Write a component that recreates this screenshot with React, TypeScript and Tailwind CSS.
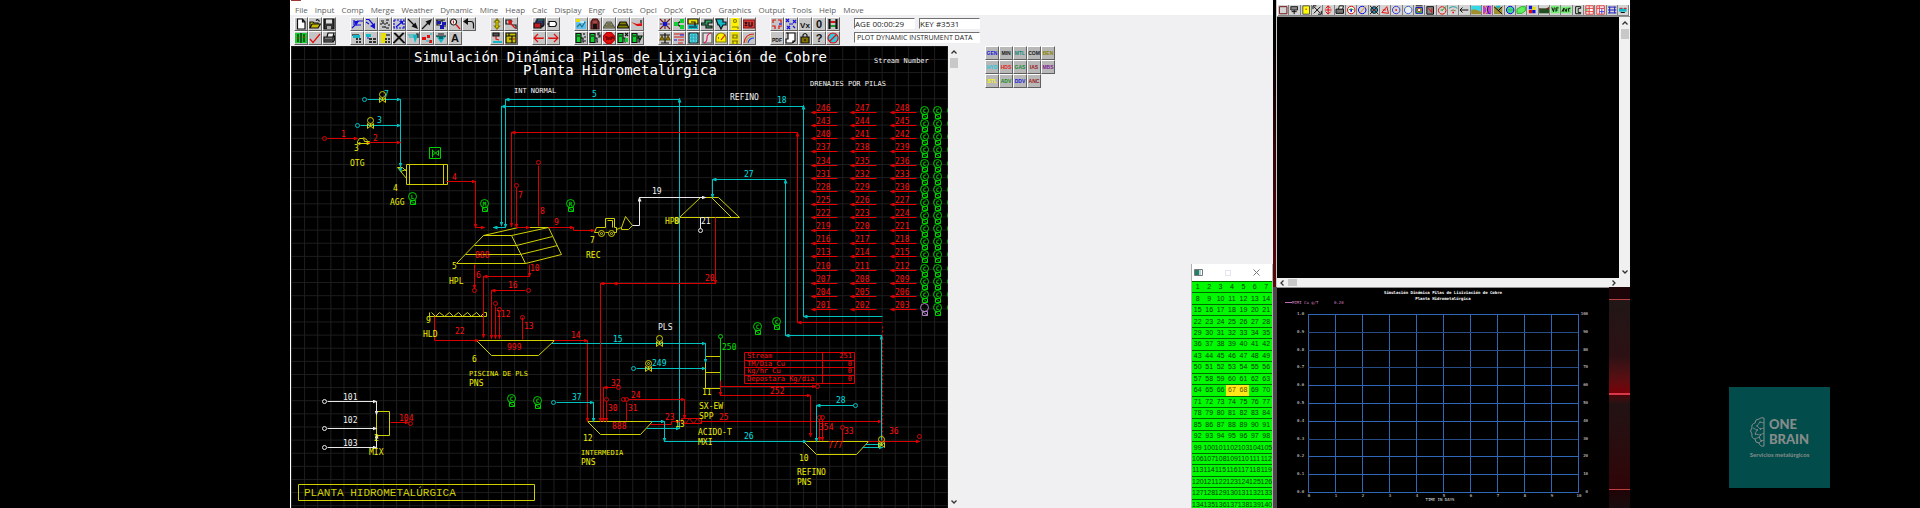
import React from "react";

type Mark = [stroke: string, fill: string, d: string];
type Tool = { name: string; marks?: Mark[]; text?: string; color?: string };

const N = "none";
const K = "#111111";
const R = "#e01010";
const B = "#1010e0";
const Y = "#e8e000";
const C = "#10b8c8";
const G = "#10d030";

function Glyph({ tool }: { tool: Tool }) {
  return (
    <svg viewBox="0 0 12 12" className="block h-full w-full" aria-hidden="true">
      {tool.marks?.map(([stroke, fill, d], i) => (
        <path key={i} d={d} stroke={stroke} fill={fill} strokeWidth="1.2" />
      ))}
      {tool.text && (
        <text
          x="6"
          y="9.5"
          textAnchor="middle"
          fill={tool.color ?? K}
          fontSize={tool.text.length > 2 ? 5 : tool.text.length > 1 ? 8 : 11}
          fontWeight="bold"
          fontFamily="Liberation Sans, sans-serif"
        >
          {tool.text}
        </text>
      )}
    </svg>
  );
}

const pump: Mark[] = [
  [N, G, "M1 1h5v10H1z"],
  [K, N, "M1 1.5h5v9H1zM2 4h3M6 6h2v4h1"],
];

const groups: Tool[][][] = [
  [
    [
      { name: "New", marks: [[K, "#fff", "M2.5 1h5l2.500 3v7h-7.500zM7.500 1v3h2.500"]] },
      { name: "Open", marks: [[K, Y, "M1 10V4h3l1 1h4v1.500"], [K, "#c8b800", "M1 10l2-4h8.500l-2.500 4z"], [K, N, "M7 2.500q2-2 3.500 1"]] },
      { name: "Save", marks: [[K, "#333", "M1 1h10v10H1z"], [N, "#ddd", "M3 1.500h6v4H3z"], [N, "#aaa", "M4 8h4v3H4z"]] },
    ],
    [
      { name: "Panels", marks: [[N, G, "M0 1h12v10H0z"], [K, N, "M3 2v8M6 1v10M9 2v8"], [R, N, "M3 5v2M9 4v2"]] },
      { name: "Check", marks: [[R, N, "M1 7l3 3.500L11 2"]] },
      { name: "Print", marks: [[K, "#eee", "M4 5l1-4h6l-1 4"], [K, "#777", "M1 5h9v5H1z"], [K, N, "M10 5l1.500-1v4l-1.500 2M2 8h7"]] },
    ],
  ],
  [
    [
      { name: "Stream in", marks: [[B, N, "M1 10l3-3M3 7h7M6 3h6M3 2v5"], [N, B, "M3 3h5L5 8z"]] },
      { name: "Stream out", marks: [[B, N, "M1 1.500h3l5 6"], [N, B, "M5 8l5 3V5z"], [B, N, "M1 4l3 2"]] },
      { name: "Rotate", marks: [[K, N, "M2 3h3M7 2h3M1 6h2M5 6h2M9 7h2M3 9h2M7 10h3M4 4v2M8 4v2M6 8v2"]] },
      { name: "Select area", marks: [[B, N, "M1 2h2m1 0h2m1 0h2m1 0h1v2m0 1v2m0 1v2h-2m-1 0h-2m-1 0h-2m-1 0h-1v-2m0-1v-2m0-1v-2M3 9l6-5"], [N, B, "M6 3h4v4z"]] },
      { name: "Arrow down", marks: [[K, N, "M1 1l8 8"], [N, K, "M11 11L4.500 8.500l4-4z"]] },
      { name: "Arrow up", marks: [[K, N, "M1 11l8-8"], [N, K, "M11 1L8.500 7.500l-4-4z"]] },
      { name: "Units", marks: [[K, N, "M1 2h9M2 2v5h3"], [N, "#1818b0", "M2 3h4v3H2zM7 4h4v3H7zM5 7h4v4H5z"], [K, N, "M7 2v2M9 8h2"]] },
      { name: "Find", marks: [[K, "#fff", "M4.500 1a3 3 0 1 0 .1 0"], [R, N, "M4.500 2.500v3"], [R, N, "M7 6.500l4 4.500"]] },
      { name: "Undo", marks: [[K, N, "M3 3.500h5q2.500 0 2.500 3v4"], [N, K, "M0 3.500L5 0v7z"]] },
    ],
    [
      { name: "Basket", marks: [[K, N, "M1 3h7"], [N, C, "M2 3h7v3H2z"], [N, "#333", "M5 6h2v2H5zM8 6h2v2H8zM5 9h2v2H5zM8 9h2v2H8z"]] },
      { name: "Trays", marks: [[N, C, "M1 2h5v3H1z"], [N, "#333", "M4 6h3v2H4zM8 6h3v2H8zM4 9h3v2H4zM8 9h3v2H8z"], [B, N, "M2 6h2"]] },
      { name: "Boxes", marks: [[N, Y, "M2 1h5v10H2z"], [N, "#333", "M6 6h2v2H6zM9 6h2v2H9zM6 9h2v2H6zM9 9h2v2H9z"], [K, N, "M7 3h4"]] },
      { name: "Delete", marks: [[K, N, "M1 1l10 10M11 1L1 11M2 1l10 10M10 1L0 11"]] },
      { name: "Spray", marks: [[C, N, "M1 3h8M2 5h6"], [N, C, "M6 3h5L8 11z"], [K, N, "M9 2h2v4"]] },
      { name: "Nodes", marks: [[N, R, "M1 5h4v3H1zM6 3h3v3H6zM8 8h3v3H8z"], [C, N, "M5 9h4M9 2h2"]] },
      { name: "Diamond", marks: [[N, C, "M1 4h10L6 11z"], [K, N, "M1 4h10M3 2h6M4 6h4"]] },
      { name: "Text", text: "A" },
    ],
  ],
  [
    [
      { name: "Fit height", marks: [["#807800", "#ffee00", "M6 1l2.500 3H7v4h1.500L6 11 3.500 8H5V4H3.500z"]] },
      { name: "Move box", marks: [[K, N, "M1 2h5v4H1zM7 7h4v4"], [R, N, "M4 4l6 6"], [N, R, "M3 2l5 1-4 4z"]] },
    ],
    [
      { name: "Export", marks: [[K, "#555", "M2 1h6v3H2z"], [R, N, "M5 4v3l3 1"], [N, C, "M2 9h9v2H2z"]] },
      { name: "Map", marks: [[K, "#c8c000", "M1 1h10v10H1z"], [K, N, "M1 4h6v7M7 4h4M4 1v3M4 7h3"], [R, N, "M8 7h2"]] },
    ],
  ],
  [
    [
      { name: "Pages", marks: [[K, "#40a0b0", "M4 1h7v6l-2 2H4z"], [K, "#5050c0", "M3 3h7v5H3z"], [K, "#c02020", "M1 5h7v5H1z"]] },
      { name: "Tag", marks: [[K, "#fff", "M2 3.500h6q3 2.500 0 5H2z"], [K, N, "M0 6h2"]] },
    ],
    [
      { name: "Previous", marks: [[R, N, "M1 6h10M5 2L1 6l4 4M1.500 6.500h9"]] },
      { name: "Next", marks: [[R, N, "M1 6h10M7 2l4 4-4 4M1.500 6.500h9"]] },
    ],
  ],
  [
    [
      { name: "Weather", marks: [[N, "#60c0f0", "M1 3h10v8H1z"], [N, Y, "M1 1h4v3H1z"], ["#207080", N, "M2 9l3-3 2 3 3-5"], ["#fff", N, "M5 4h4"]] },
      { name: "Mine", marks: [["#501010", "#803030", "M2 11V4l2-3h4l2 3v7z"], [N, K, "M4 11V6h4v5z"], ["#b06060", N, "M4 4h4"]] },
      { name: "Pile", marks: [["#555", "#a0a060", "M0 10L4 4h4l4 6z"], ["#444", N, "M2 8h8M4 6h4"]] },
      { name: "Heap", marks: [[K, "#808000", "M0 10l3-6h6l3 6z"], [K, N, "M2 7h8"]] },
      { name: "Slope", marks: [[N, R, "M0 4l6 2 5-1v3H6z"], [K, N, "M10 2v3"]] },
    ],
    [
      { name: "Pump 1", marks: [...pump, [K, N, "M9 1v2M9 5h2M9 9h2"]] },
      { name: "Pump 5", marks: [...pump, [K, N, "M11 1H9v2h2v2H9"]] },
      { name: "Stop", marks: [["#c00000", R, "M4 .5h4L11.500 4v4L8 11.500H4L.5 8V4z"], ["#500000", N, "M2 5h2v3M6 5v3M8 8V5h2v2"]] },
      { name: "Pump X", marks: [...pump, [K, N, "M8 1l3 3M11 1L8 4"], [N, G, "M8 6h3v4H8z"]] },
      { name: "Pump out", marks: [...pump, [K, G, "M7 4h4l-2 4z"]] },
    ],
  ],
  [
    [
      { name: "Bug", marks: [["#702020", N, "M1 1l10 10M11 1L1 11M1 6h10M6 1v10"], [N, B, "M4 4h4v4H4z"]] },
      { name: "Split", marks: [[K, N, "M4 6l4-3M4 6l4 3"], [N, G, "M1 4h4v4H1zM7 1h4v4H7zM7 7h4v4H7z"]] },
      { name: "Section", marks: [[K, Y, "M1 1h10v5H1z"], [N, C, "M1 7h10v4H1z"], [K, N, "M4 4h4v4M2 9h8"]] },
      { name: "Steps", marks: [[K, "#30a060", "M0 5h4V2h7v3H7v3h4v2H5V7H0z"]] },
      { name: "Funnel", marks: [[K, C, "M1 1h7v3h3v3H8l-2 4-2-4H3z"]] },
      { name: "Operator", marks: [[N, "#fff000", "M2 0h8v12H2z"], ["#808000", N, "M4.500 3a1.500 1.500 0 1 0 3 0a1.500 1.500 0 1 0-3 0M3 9h6v2"]] },
      { name: "Plot XY", marks: [["#901010", "#d83838", "M0 2h12v8H0z"], [K, N, "M2 4l2 4M4 4L2 8M6 4v4h3M9 4v4"]] },
    ],
    [
      { name: "Balance", marks: [["#605000", "#a09000", "M1 8h4L3 4zM7 8h4L9 4z"], [K, N, "M6 1v10M1 3h10M2 11h8"]] },
      { name: "Bars", marks: [["#d02020", N, "M1 2h10M1 5h10M5 8h6M5 11h5"], [B, N, "M1 8h3M7 3h4"]] },
      { name: "Table", marks: [[K, "#50e0f0", "M2 1h9v10H2z"], ["#30a0b0", N, "M2 4h9M2 7h9M5 1v10M8 1v10"]] },
      { name: "Curve", marks: [["#555", "#ddd", "M2 1h9v10H2z"], ["#e02060", N, "M3 11q3-1 3-5t4-5"]] },
      { name: "Gauge", marks: [["#888000", "#fff000", "M1 10V6a5 5 0 0 1 10 0v4z"], [R, N, "M6 8l4-5"], [K, N, "M3 6h1"]] },
      { name: "Robot", marks: [[N, Y, "M2 0h8v12H2z"], ["#807000", N, "M4 3h4v3H4zM3 9h6M4 9v3M8 9v3"]] },
      { name: "Rainbow", marks: [["#e02020", N, "M1 11q1-9 10-9"], ["#c0a040", N, "M3 11q1-7 8-7"], ["#2040e0", N, "M5 11q1-5 6-5"]] },
    ],
  ],
  [
    [
      { name: "Flow", marks: [[R, N, "M5 2H2v3M1 8h3v3M7 2h3v3M11 8H8v3"], [B, N, "M8 6h3"]] },
      { name: "Scatter", marks: [[B, N, "M1 1l3 3M4 1L1 4M8 2l3 3M11 2L8 5M2 8l3 3M5 8l-3 3M8 8l2 2M4 6h4"]] },
      { name: "Variable", text: "Vx" },
      { name: "Zero", text: "0" },
      { name: "Rails", marks: [[K, N, "M2 1v10M3 1v10M9 1v10M10 1v10M2 4h8M2 8h8"], [N, R, "M4 3h4v2H4z"], [N, "#10a030", "M4 7h4v2H4z"]] },
    ],
    [
      { name: "Pdf", text: "PDF" },
      { name: "Notes", marks: [[K, "#fff", "M3 1h7v8l-3 2H1V7h2z"], [K, N, "M1 1h2M8 11V9h2"]] },
      { name: "Lock", marks: [[K, "#807000", "M2 5h8v6H2z"], [K, N, "M4 5V3q2-3 4 0v2M6 7v2"]] },
      { name: "Help", text: "?" },
      { name: "Disable", marks: [[R, "#30c8e0", "M6 1a5 5 0 1 0 .1 0"], [R, N, "M2.500 9.500l7-7"]] },
    ],
  ],
];

const plotTools: Tool[] = [
  { name: "Frame", marks: [["#701818", N, "M1.500 2h9v8.500h-9z"]] },
  { name: "Camera", marks: [["#222", "#888", "M2 2h8v4H2z"], [K, N, "M6 6v5M3 8h6"]] },
  { name: "Note", marks: [["#555", "#ffff00", "M2 1h8v10H2z"], [R, N, "M5 5h2"]] },
  { name: "Expand", marks: [[K, N, "M2 2l8 8M10 2l-8 8M1 5V1h4M7 11h4V7"]] },
  { name: "Stretch", marks: [[R, N, "M6 1v10M3 4l3-3 3 3M3 8l3 3 3-3M2 6h8"]] },
  { name: "Print plot", marks: [[K, "#eee", "M4 5l1-4h5l-1 4"], [K, "#777", "M1 5h9v5H1z"]] },
  { name: "Ring", marks: [[R, "#fff", "M6 1.500a4.500 4.500 0 1 0 .1 0"], ["#20a020", N, "M3 6q3-3 6 0"], [N, B, "M5 5h2v3H5z"]] },
  { name: "Pen", marks: [[B, N, "M6 1.500a4.500 4.500 0 1 0 .1 0"], ["#d09020", N, "M3 10l7-8"]] },
  { name: "Cross", marks: [[K, "#20a0c0", "M6 2a4 4 0 1 0 .1 0"], [K, N, "M1 1l10 10M11 1L1 11"], [R, N, "M4 6h4"]] },
  { name: "Polygon", marks: [[R, N, "M2 9l6-7 2 8zM3 6h4"]] },
  { name: "Target", marks: [["#4040d0", N, "M6 1.500a4.500 4.500 0 1 0 .1 0"], [N, R, "M5 5h2v2H5z"]] },
  { name: "Circle", marks: [["#4060d0", "#eee", "M6 1.500a4.500 4.500 0 1 0 .1 0"], ["#60b060", N, "M2 4l2-2"]] },
  { name: "Layers", marks: [["#2020c0", "#40c040", "M2 3h8v7H2z"], [R, "#fff", "M6 4a2 2 0 1 0 .1 0"], [K, N, "M2 1h8"]] },
  { name: "Stamp", marks: [[K, "#888", "M2 2h8v9H2z"], [R, N, "M4 4l4 5M8 4v5"]] },
  { name: "Radar", marks: [[R, N, "M6 2a4.500 4.500 0 1 0 .1 0"], ["#20a020", N, "M6 6.500l5-5M4 6h3"]] },
  { name: "Signal", marks: [["#20a0a0", N, "M1 4q5-4 10 0"], ["#907040", N, "M3 7q3-2 6 0"], [N, R, "M5 8h2v2H5z"]] },
  { name: "Back", marks: [[K, N, "M1 6h10M4 3L1 6l3 3"]] },
  { name: "Terrain", marks: [[N, "#30d8e8", "M0 1h12v6H0z"], [N, "#a09030", "M0 11V6l4-1 8 3v3z"]] },
  { name: "Contours", marks: [[N, "#c040c0", "M1 1h10v10H1z"], [Y, N, "M3 1q6 5 0 10"], [B, N, "M8 1q-4 5 1 10"]] },
  { name: "Hills", marks: [[N, "#a09030", "M1 2h10v9H1z"], [K, N, "M1 2l10 9M11 2L6 7"], [N, C, "M3 1h6L6 5z"]] },
  { name: "Globe", marks: [[B, "#40d890", "M6 1.500a4.500 4.500 0 1 0 .1 0"], ["#30c030", N, "M3 6h6"]] },
  { name: "Leaf", marks: [["#30b030", "#60f060", "M1 10V5l5-3h5v5l-4 3z"]] },
  { name: "Blocks", marks: [[N, B, "M2 1h4v4H2zM6 6h4v4H6z"], [N, Y, "M6 2h4v4H6z"], [N, R, "M2 6h4v4H2z"]] },
  { name: "Horizon", marks: [[N, "#205020", "M0 4h12v6H0z"], [N, "#802020", "M0 4l6 2 6-4v3H0z"]] },
  { name: "VF", marks: [[N, "#70ee70", "M1 1h10v9H1z"], [K, N, "M2 3l2 5 1-5M7 8V3.500h3M7 6h2"]] },
  { name: "AVF", marks: [[N, "#70ee70", "M0 2h12v8H0z"], [K, N, "M1 8l2-4v4M4 4l2 4 1-4M9 8V4h2"]] },
  { name: "Outline", marks: [[K, "#d8f0d8", "M3 2h6v2H6v5h3v1.500H3z"]] },
  { name: "Red grid", marks: [["#e04040", "#fff", "M2 1h9v10H2z"], ["#e04040", N, "M2 4h9M2 8h9M6 1v10"], ["#40b040", N, "M1 6h4"]] },
  { name: "Mixed grid", marks: [["#e04040", "#fff", "M2 1h9v10H2z"], ["#e04040", N, "M2 4h9M5 1v10"], ["#4040e0", N, "M5 8h6M8 4v7"]] },
  { name: "Blue grid", marks: [["#2020c0", N, "M1 2.500h10M1 6h10M1 9.500h10M3 2v8M9 2v8"]] },
  { name: "Wave", marks: [[N, C, "M1 4h9v4H1z"], [R, N, "M2 4h3M7 4h3"], [K, N, "M3 9h5"]] },
];

const menus = [
  "File", "Input", "Comp", "Merge", "Weather", "Dynamic", "Mine", "Heap", "Calc", "Display",
  "Engr", "Costs", "Opcl", "OpcX", "OpcO", "Graphics", "Output", "Tools", "Help", "Move",
];

const palette: [string, string][] = [
  ["GEN", "#1818d8"], ["MIN", "#181818"], ["MTL", "#108878"], ["COM", "#181818"], ["BEN", "#888000"],
  ["HYD", "#10c8e0"], ["HDS", "#e81818"], ["GAS", "#188838"], ["IAS", "#981818"], ["MBS", "#802090"],
  ["STL", "#f8f800"], ["ADV", "#188818"], ["DDV", "#1818d8"], ["ANC", "#981818"],
];

function ToolButton({ tool }: { tool: Tool }) {
  return (
    <button
      aria-label={tool.name}
      className="h-[14px] w-[14px] border border-t-white border-r-[#606060] border-b-[#606060] border-l-white bg-[#c6c6c6]"
    >
      <Glyph tool={tool} />
    </button>
  );
}

function ScrollBar() {
  return (
    <div className="flex w-[11px] flex-none flex-col items-center justify-between bg-[#f0f0f0] py-1">
      <div className="flex flex-col items-center gap-1">
        <svg viewBox="0 0 6 4" className="h-1 w-[6px]" aria-hidden="true">
          <path d="M.5 3.500L3 1l2.500 2.500" fill="none" stroke="#333" strokeWidth="1.300" />
        </svg>
        <div className="h-[10px] w-2 bg-[#c8c8c8]" />
      </div>
      <svg viewBox="0 0 6 4" className="h-1 w-[6px]" aria-hidden="true">
        <path d="M.5 .5L3 3 5.500.5" fill="none" stroke="#333" strokeWidth="1.300" />
      </svg>
    </div>
  );
}

/* ---------- process diagram ---------- */

const RED = "#d80000";
const CYAN = "#00c0c0";
const YEL = "#d0d000";
const GRN = "#00d000";
const WHT = "#e8e8e8";
const arrowOf: Record<string, string> = {
  [RED]: "url(#tip-red)",
  [CYAN]: "url(#tip-cyan)",
  [WHT]: "url(#tip-white)",
};
/* Lettering is drawn a little brighter than the lines it belongs to. */
const inkOf: Record<string, string> = {
  [RED]: "#ff1010",
  [CYAN]: "#00e0e0",
  [YEL]: "#f0f000",
  [GRN]: "#00e800",
  [WHT]: "#f4f4f4",
};

const pipes: [color: string, points: string, arrow: boolean][] = [
  [CYAN, "367,99 400,99", true],
  [CYAN, "360,125 400,125", true],
  [CYAN, "400,99 400,166", true],
  [CYAN, "400,160 400,171", true],
  [RED, "327,138 357,138", true],
  [RED, "366,142 400,142", true],
  [RED, "446,181 475,181", true],
  [RED, "475,181 475,227", true],
  [RED, "475,227 484,227", true],
  [CYAN, "679,99 505,99", true],
  [CYAN, "505,99 505,227", true],
  [CYAN, "505,227 493,227", true],
  [CYAN, "803,106 501,106", true],
  [CYAN, "501,106 501,225", true],
  [CYAN, "679,428 679,98", true],
  [CYAN, "803,316 803,105", true],
  [CYAN, "882,316 803,316", true],
  [RED, "797,132 511,132", true],
  [RED, "511,132 511,226", true],
  [RED, "797,322 797,132", true],
  [RED, "882,322 797,322", true],
  [RED, "516,187 516,227", true],
  [RED, "538,165 538,226", false],
  [RED, "516,227 529,227", true],
  [RED, "548,227 573,227", true],
  [RED, "573,227 573,230 594,230", true],
  [RED, "474,264 474,288", true],
  [RED, "529,264 529,276", true],
  [RED, "529,276 483,276", true],
  [RED, "483,276 483,337", true],
  [RED, "525,290 491,290", true],
  [RED, "491,290 491,338", true],
  [RED, "495,306 495,338", true],
  [RED, "499,312 499,338", true],
  [RED, "522,339 522,317", false],
  [RED, "434,316 434,340 478,340", true],
  [RED, "554,340 587,340", true],
  [RED, "587,340 587,421", true],
  [CYAN, "551,343 705,343", true],
  [CYAN, "705,343 705,362", true],
  [WHT, "327,401 376,401", true],
  [WHT, "327,428 376,428", true],
  [WHT, "327,447 376,447", true],
  [WHT, "376,401 376,414", true],
  [WHT, "376,447 376,434", true],
  [RED, "390,422 408,422", true],
  [CYAN, "556,402 593,402", true],
  [CYAN, "593,402 593,421", true],
  [RED, "715,217 715,283", true],
  [RED, "715,283 613,283", true],
  [RED, "715,283 600,283", true],
  [RED, "600,283 600,421", true],
  [RED, "615,387 603,387", true],
  [RED, "603,387 603,421", true],
  [RED, "606,401 606,421", true],
  [RED, "626,420 626,402", false],
  [RED, "628,399 684,399", true],
  [RED, "684,399 684,418", true],
  [RED, "650,424 671,424 671,421 679,421", true],
  [CYAN, "650,421 664,421", true],
  [CYAN, "664,421 664,441", true],
  [CYAN, "664,441 806,441", true],
  [CYAN, "646,428 679,428", true],
  [RED, "701,421 881,421", true],
  [CYAN, "636,368 705,368", true],
  [RED, "720,380 720,395", true],
  [RED, "720,395 810,395", true],
  [RED, "810,395 810,436", true],
  [RED, "720,386 815,386", true],
  [CYAN, "785,179 712,179", true],
  [CYAN, "712,179 712,197", true],
  [CYAN, "785,335 785,179", true],
  [CYAN, "881,335 785,335", true],
  [CYAN, "881,440 881,335", true],
  [WHT, "632,225 639,225", false],
  [WHT, "639,225 639,197", true],
  [WHT, "639,197 705,197", true],
  [WHT, "700,217 700,228", false],
  [CYAN, "853,405 816,405", true],
  [CYAN, "816,405 816,441", true],
  [RED, "819,419 819,440", true],
  [RED, "822,419 822,440", true],
  [RED, "842,441 842,429", false],
  [RED, "868,441 919,441", true],
  [CYAN, "865,444 882,444", true],
  [CYAN, "862,447 882,447", true],
];

const nodes: [number, number, string][] = [
  [364, 99, CYAN], [357, 125, CYAN], [324, 138, RED], [516, 185, RED], [538, 162, RED],
  [474, 290, RED], [528, 290, RED], [495, 303, RED], [499, 309, RED], [522, 317, RED],
  [324, 401, WHT], [324, 428, WHT], [324, 447, WHT], [410, 423, RED], [553, 402, CYAN],
  [618, 387, RED], [606, 399, RED], [623, 399, RED], [626, 399, RED], [633, 368, CYAN],
  [720, 336, GRN], [817, 386, RED], [700, 230, WHT], [855, 405, CYAN], [819, 417, RED],
  [822, 417, RED], [842, 427, RED], [919, 436, RED],
];

const labels: [number, number, string, string][] = [
  [514, 93, "INT NORMAL", WHT], [874, 63, "Stream Number", WHT], [810, 86, "DRENAJES POR PILAS", WHT],
  [730, 100, "REFINO", WHT], [777, 103, "18", CYAN], [592, 97, "5", CYAN], [384, 97, "7", CYAN],
  [377, 123, "3", CYAN], [341, 137, "1", RED], [373, 141, "2", RED], [354, 151, "3", YEL],
  [350, 166, "OTG", YEL], [393, 191, "4", YEL], [390, 205, "AGG", YEL], [452, 180, "4", RED],
  [518, 198, "7", RED], [540, 214, "8", RED], [554, 225, "9", RED], [590, 243, "7", YEL],
  [586, 258, "REC", YEL], [475, 258, "888", RED], [452, 269, "5", YEL], [449, 284, "HPL", YEL],
  [476, 278, "6", RED], [530, 271, "10", RED], [508, 288, "16", RED], [496, 317, "112", RED],
  [524, 329, "13", RED], [426, 323, "9", YEL], [423, 337, "HLD", YEL], [455, 334, "22", RED],
  [507, 350, "999", RED], [472, 362, "6", YEL], [469, 376, "PISCINA DE PLS", YEL], [469, 386, "PNS", YEL],
  [571, 338, "14", RED], [613, 342, "15", CYAN], [343, 400, "101", WHT], [343, 423, "102", WHT],
  [343, 446, "103", WHT], [399, 421, "104", RED], [374, 441, "2", YEL], [369, 455, "MIX", YEL],
  [572, 400, "37", CYAN], [612, 429, "888", RED], [583, 441, "12", YEL], [581, 455, "INTERMEDIA", YEL],
  [581, 465, "PNS", YEL], [705, 281, "20", RED], [611, 386, "32", RED], [608, 411, "30", RED],
  [628, 411, "31", RED], [631, 398, "24", RED], [665, 420, "23", RED], [744, 439, "26", CYAN],
  [675, 427, "13", YEL], [719, 420, "25", RED], [658, 330, "PLS", WHT], [652, 366, "249", CYAN],
  [722, 350, "250", GRN], [770, 394, "252", RED], [702, 395, "11", YEL], [699, 409, "SX-EW", YEL],
  [699, 419, "SPP", YEL], [698, 435, "ACIDO-T", YEL], [698, 445, "MXI", YEL], [744, 177, "27", CYAN],
  [652, 194, "19", WHT], [701, 224, "21", WHT], [665, 224, "HPD", YEL], [674, 224, "8", YEL],
  [836, 403, "28", CYAN], [819, 430, "354", RED], [844, 434, "33", RED], [828, 448, "777", RED],
  [799, 461, "10", YEL], [797, 475, "REFINO", YEL], [797, 485, "PNS", YEL], [889, 434, "36", RED],
];

const outlines = [
  "M406 164h41v20h-41zM409 164v20M443 164v20M397 167h5l4 4M397 167l9 11M400 171l6-2",
  "M483 235H511L525 263H456zM474 245H516M465 254H520M483 235L518 227H548L561 254L525 263M511 235L548 227M516 245L552 236M520 254L557 245",
  "M429 316H486V312H484M429 316V312M431 312l4 4 4-4 5 4 5-4 4 4 5-4 4 4 5-4 4 4 5-4 4 4 4-4",
  "M476 340H554L538 355H491z",
  "M376 411h13v24h-13z",
  "M587 421H652L640 434H600z",
  "M705 356h15v32h-15zM705 372h15",
  "M679 217L700 197H718L739 217zM711 197L731 217",
  "M803 441H868L856 454H816z",
  "M298 484h236v16H298z",
  "M357 141l2-3h4l1 3h5v2h-12zM363 137l4 3",
  "M594 232l2-5h9v-9h9v9h2v5h-3M605 232h3M594 232h4M607 220h5v7M616 229l5-2M621 227l4-11 7 9-4 4h-7z",
];

const meters: [number, number, string, string][] = [
  [412, 196, "L", GRN], [484, 203, "M", GRN], [570, 203, "R", GRN], [511, 398, "C", GRN],
  [537, 400, "C", GRN], [757, 326, "C", GRN], [776, 321, "C", GRN],
];

function Meter({ x, y, letter, color }: { x: number; y: number; letter: string; color: string }) {
  return (
    <g stroke={color} fill="none">
      <circle cx={x} cy={y} r="4" />
      <path d={`M${x - 2} ${y + 4}h5v4h-5zM${x - 2} ${y + 4}l5 4`} />
      {letter && (
        <text x={x} y={y + 2} textAnchor="middle" fontSize="6" fontWeight="bold" fill={color} stroke="none">
          {letter}
        </text>
      )}
    </g>
  );
}

function Valve({ x, y }: { x: number; y: number }) {
  return (
    <g stroke={YEL} fill="none">
      <circle cx={x} cy={y - 5} r="3" />
      <path d={`M${x - 3} ${y - 2}l6 5v-5l-6 5zM${x} ${y - 2}v3`} />
    </g>
  );
}

const wells = Array.from({ length: 16 }, (_, row) => ({
  y: Math.round(112 + (row * 197) / 15),
  first: 246 - row * 3,
}));

const balance: [string, string][] = [
  ["Stream", "251"], ["TM/Dia Cu", "0"], ["kg/hr Cu", "0"], ["Depostara Kg/dia", "0"],
];

function Diagram() {
  return (
    <svg
      viewBox="291 46 657 462"
      preserveAspectRatio="xMinYMin meet"
      className="block h-full w-full bg-black"
      fontFamily="DejaVu Sans Mono, monospace"
      fontSize="8"
    >
      <defs>
        <pattern id="mesh" x="291" y="59" width="13.125" height="13.125" patternUnits="userSpaceOnUse">
          <path d="M.5 0v13.125M0 .5h13.125" stroke="#1e1e1e" fill="none" />
        </pattern>
        {[["red", RED], ["cyan", CYAN], ["white", WHT]].map(([id, color]) => (
          <marker key={id} id={`tip-${id}`} viewBox="0 0 5 4" refX="4" refY="2" markerWidth="5" markerHeight="4" orient="auto">
            <path d="M0 0l5 2-5 2z" fill={color} />
          </marker>
        ))}
      </defs>
      <rect x="291" y="46" width="657" height="462" fill="url(#mesh)" />
      <g transform="translate(.5 .5)" fill="none">
        {outlines.map((d) => (
          <path key={d} d={d} stroke={YEL} />
        ))}
        {pipes.map(([color, points, arrow], i) => (
          <polyline key={i} points={points} stroke={color} markerEnd={arrow ? arrowOf[color] : undefined} />
        ))}
        <path d="M882 440V324" stroke={RED} strokeDasharray="2 2" />
        <path d="M720 338V380" stroke={GRN} />
        <path d="M681 418h20v5h-20zM681 418l4 5 4-5 4 5 4-5 4 5" stroke={RED} />
        <path d="M429 147h11v11h-11zM432 149v8M432 150l6 5v-5l-6 5" stroke={GRN} />
        <path d="M744 352H854V383H744zM744 360H854M744 367H854M744 375H854M822 352V383" stroke={RED} />
        {nodes.map(([x, y, color], i) => (
          <circle key={i} cx={x} cy={y} r="2" stroke={color} />
        ))}
        <g stroke={YEL}>
          <circle cx="601" cy="233" r="3" />
          <circle cx="611" cy="233" r="3" />
          <circle cx="601" cy="233" r="1" />
          <circle cx="611" cy="233" r="1" />
          <circle cx="359" cy="143" r="1" />
          <circle cx="367" cy="143" r="1" />
          <circle cx="648" cy="363" r="1" />
        </g>
        <Valve x={382} y={99} />
        <Valve x={370} y={125} />
        <Valve x={659} y={343} />
        <Valve x={648} y={368} />
        <Valve x={881} y={444} />
        {meters.map(([x, y, letter, color]) => (
          <Meter key={`${x}`} x={x} y={y} letter={letter} color={color} />
        ))}
        {wells.map(({ y, first }, row) => (
          <g key={first}>
            {[811, 850, 890].map((x, col) => (
              <path key={x} d={`M${x + 26} ${y}H${x}`} stroke="#e80000" markerEnd="url(#tip-red)" />
            ))}
            {[924, 937, 951].map((x, col) => (
              <Meter
                key={x}
                x={x}
                y={y - 2}
                letter={col === 2 || (row === 15 && col === 0) ? "" : "C"}
                color={row === 15 && col === 0 ? "#b080c8" : GRN}
              />
            ))}
          </g>
        ))}
      </g>
      {wells.map(({ y, first }) => (
        <g key={first} fill={inkOf[RED]}>
          {[816, 855, 895].map((x, col) => (
            <text key={x} x={x} y={y - 1}>{first + col}</text>
          ))}
        </g>
      ))}
      {labels.map(([x, y, text, color], i) => (
        <text key={i} x={x} y={y} fill={inkOf[color]} fontSize={text.length > 7 ? 7 : 8}>{text}</text>
      ))}
      {balance.map(([name, value], i) => (
        <g key={name} fill={inkOf[RED]} fontSize="7">
          <text x="747" y={Math.round(358 + i * 7.7)}>{name}</text>
          <text x="852" y={Math.round(358 + i * 7.7)} textAnchor="end">{value}</text>
        </g>
      ))}
      <g fill="#ffffff" fontSize="14">
        <text x="414" y="62">Simulación Dinámica Pilas de Lixiviación de Cobre</text>
        <text x="523" y="75">Planta Hidrometalúrgica</text>
      </g>
      <text x="304" y="496" fontSize="11" fontFamily="Liberation Mono, monospace" fill={YEL}>
        PLANTA HIDROMETALÚRGICA
      </text>
    </svg>
  );
}

/* ---------- numbered instrument window ---------- */

function InstrumentWindow() {
  return (
    <section className="absolute top-[264px] right-0 bottom-0 w-[82px] overflow-hidden border-x border-[#b0b0b0] bg-white">
      <header className="flex h-[17px] items-center justify-between px-[2px]">
        <svg viewBox="0 0 9 7" className="h-[7px] w-[9px]" aria-hidden="true">
          <path d="M.5.5h8v6h-8z" fill="#fff" stroke="#777" />
          <path d="M1 1h4v5H1z" fill="#208060" />
          <path d="M6 1v5" stroke="#60a0c0" />
        </svg>
        <button aria-label="Maximize" className="h-[6px] w-[6px] border border-[#e4e4ee]" />
        <button aria-label="Close" className="mr-[10px] h-[7px] w-[7px]">
          <svg viewBox="0 0 7 7" className="block" aria-hidden="true">
            <path d="M.5.5l6 6M6.500.5l-6 6" stroke="#777" fill="none" />
          </svg>
        </button>
      </header>
      <table className="h-[229px] w-full table-fixed border-collapse bg-[#00f800] text-center font-['Liberation_Sans',sans-serif] text-[7px] leading-[8px] text-[#003800]">
        <tbody>
          {Array.from({ length: 20 }, (_, row) => (
            <tr key={row} className="border-t border-[#006800]">
              {Array.from({ length: 7 }, (_, col) => {
                const n = row * 7 + col + 1;
                return (
                  <td key={n} className={n === 67 || n === 68 ? "bg-[#ffe818] p-0 text-[#605000]" : "p-0"}>
                    {n}
                  </td>
                );
              })}
            </tr>
          ))}
        </tbody>
      </table>
    </section>
  );
}

/* ---------- time plot ---------- */

function TimePlot() {
  const steps = Array.from({ length: 11 }, (_, i) => i);
  const rowY = (i: number) => Math.round(492 - i * 17.8);
  return (
    <svg
      viewBox="1277 288 332 220"
      preserveAspectRatio="xMidYMin meet"
      className="block h-full w-full bg-black"
      fontFamily="DejaVu Sans Mono, monospace"
      fontSize="4"
      fill="#e0e0e0"
    >
      <g fontWeight="bold" textAnchor="middle" fill="#ffffff">
        <text x="1443" y="294">Simulación Dinámica Pilas de Lixiviación de Cobre</text>
        <text x="1443" y="300">Planta Hidrometalúrgica</text>
      </g>
      <g fill="#d080c0">
        <path d="M1285 302.500h7" stroke="#c070b0" />
        <text x="1292" y="304">MIMI Cu g/T</text>
        <text x="1334" y="304">0.20</text>
      </g>
      {steps.map((i) => (
        <g key={i}>
          <path d={`M1308 ${rowY(i) + 0.5}H1579`} stroke={i === 8 || i === 9 || i === 7 || i === 3 ? "#284c88" : "#3068b8"} />
          <path d={`M${1308.5 + i * 27} 314V493`} stroke="#3068b8" />
          <text x="1297" y={rowY(i) + 1}>{(i / 10).toFixed(1)}</text>
          <text x="1588" y={rowY(i) + 1} textAnchor="end">{i * 10}</text>
          <text x={1309 + i * 27} y="497" textAnchor="middle">{i}</text>
        </g>
      ))}
      <text x="1440" y="501" textAnchor="middle">TIME IN DAYS</text>
    </svg>
  );
}

function Status({ label, value, className }: { label: string; value: string; className: string }) {
  return (
    <input
      readOnly
      aria-label={label}
      value={value}
      className={`h-[11px] min-w-0 border border-t-[#707070] border-r-white border-b-white border-l-[#707070] bg-white font-['Open_Sans',sans-serif] leading-[9px] text-[#222222] outline-none ${className}`}
    />
  );
}

export default function App() {
  return (
    <div className="grid h-screen grid-cols-[minmax(0,1fr)_minmax(0,1340px)_minmax(0,1fr)] overflow-hidden bg-black">
      <div />
      <main className="flex min-h-0 min-w-0">
        <section className="relative flex min-w-0 flex-[983] flex-col bg-[#f0f0f2]">
          <nav className="relative flex h-[15px] flex-none items-center gap-[7px] bg-white pt-1 pl-[5px] font-['Open_Sans',sans-serif] text-[8px] leading-[10px] text-[#606060]">
            <span className="absolute top-0 left-px h-px w-[10px] bg-[#a03838]" />
            {menus.map((m) => (
              <button key={m} className="whitespace-nowrap">{m}</button>
            ))}
          </nav>
          <div className="flex h-[31px] flex-none gap-[14px] pt-[2px] pl-1">
            {groups.map((rows, g) => (
              <div key={g} className="flex-none">
                {rows.map((row, r) => (
                  <div key={r} className="flex">
                    {row.map((tool) => (
                      <ToolButton key={tool.name} tool={tool} />
                    ))}
                  </div>
                ))}
              </div>
            ))}
            <div className="grid h-[26px] w-[126px] grid-cols-2 content-between gap-x-1 pt-px">
              <Status label="Age" value="AGE 00:00:29" className="text-[8px]" />
              <Status label="Key" value="KEY #3531" className="text-[8px]" />
              <Status label="Message" value="PLOT DYNAMIC INSTRUMENT DATA" className="col-span-2 pl-[2px] text-[7px]" />
            </div>
          </div>
          <div className="flex min-h-0 flex-1">
            <div className="w-px flex-none bg-white" />
            <div className="min-w-0 flex-[657]">
              <Diagram />
            </div>
            <ScrollBar />
            <div className="min-w-0 flex-[314]">
              <div className="ml-[26px] grid w-[70px] grid-cols-5">
                {palette.map(([name, color]) => (
                  <button
                    key={name}
                    className="h-[14px] w-[14px] border border-t-white border-r-[#606060] border-b-[#606060] border-l-white bg-[#b8b8b8]"
                  >
                    <svg viewBox="0 0 12 12" className="block h-full w-full">
                      <text x="6" y="8" textAnchor="middle" fontSize="5" fontWeight="bold" fontFamily="Liberation Sans, sans-serif" fill={color}>
                        {name}
                      </text>
                    </svg>
                  </button>
                ))}
              </div>
            </div>
          </div>
          <InstrumentWindow />
        </section>
        <section className="flex min-w-0 flex-[357] flex-col">
          <div className="flex min-h-0 flex-[287]">
            <div className="w-1 flex-none border-r border-[#c8c8c8] bg-linear-to-b from-black via-[#300408] to-[#580808]" />
            <div className="flex min-w-0 flex-1 flex-col bg-[#f0f0f0]">
              <div className="flex h-[17px] flex-none border-b border-[#909090] bg-white pt-[5px] pr-px pl-px">
                {plotTools.map((tool) => (
                  <button
                    key={tool.name}
                    aria-label={tool.name}
                    className="h-[11px] min-w-0 flex-1 border-r border-b border-[#808080] bg-[#d4d4d4]"
                  >
                    <Glyph tool={tool} />
                  </button>
                ))}
              </div>
              <div className="flex min-h-0 flex-1">
                <div className="flex-1 bg-black" />
                <ScrollBar />
              </div>
              <div className="flex h-[9px] flex-none items-center justify-between pr-[14px] pl-[3px]">
                <div className="flex items-center gap-1">
                  <svg viewBox="0 0 4 6" className="h-[6px] w-1" aria-hidden="true">
                    <path d="M3.500.5L1 3l2.500 2.500" fill="none" stroke="#333" strokeWidth="1.300" />
                  </svg>
                  <div className="h-[7px] w-[9px] bg-[#c8c8c8]" />
                </div>
                <svg viewBox="0 0 4 6" className="h-[6px] w-1" aria-hidden="true">
                  <path d="M.5.5L3 3 .5 5.500" fill="none" stroke="#333" strokeWidth="1.300" />
                </svg>
              </div>
            </div>
          </div>
          <div className="flex min-h-0 flex-[221]">
            <div className="w-1 flex-none bg-[#4a4448]" />
            <div className="min-w-0 flex-[332] border-t border-[#909090]">
              <TimePlot />
            </div>
            <div className="flex min-w-0 flex-[21] flex-col">
              <div className="h-[12px] bg-[#1c0408]" />
              <div className="h-px bg-[#b84040]" />
              <div className="flex-[93] bg-linear-to-b from-[#221616] from-5% via-[#2c1014] via-60% to-[#780008]" />
              <div className="h-[2px] bg-[#d83848]" />
              <div className="flex-[94] bg-linear-to-b from-[#480408] via-[#221214] via-10% to-[#300408]" />
              <div className="h-px bg-[#c04040]" />
              <div className="flex-[18] bg-linear-to-b from-[#200406] to-[#180c0e]" />
            </div>
          </div>
        </section>
      </main>
      <aside className="flex items-end justify-end pr-[90px] pb-5">
        <div className="flex h-[101px] w-[101px] flex-col items-center justify-center gap-1 bg-[#034c4c] font-['Lato',sans-serif] text-[#868c8a]">
          <div className="flex items-center gap-1">
            <svg viewBox="0 0 15 30" className="h-[30px] w-[15px]" fill="none" stroke="#868c8a" aria-hidden="true">
              <path d="M14 1v28q-4 1-5-3-4 0-4-4-4-1-3-5-3-3 0-6-1-4 3-5 0-4 4-4 2-2 5-1" />
              <path d="M14 6l-4-1-3 4 3 3 4-1M3 11l4 2-2 4 5 1 4-2M5 22l4-2 2 4 3-1M9 26l2-2" strokeWidth=".8" />
              <path d="M9.500 5h1M6.500 9h1M10 12h1M7 13h1M5 17h1M10 18h1M9 20h1M11 24h1" strokeWidth="1.500" />
            </svg>
            <div className="text-[13px] leading-[15px] font-black">
              ONE
              <br />
              BRAIN
            </div>
          </div>
          <div className="text-[6px] leading-[8px] font-bold">Servicios metalúrgicos</div>
        </div>
      </aside>
    </div>
  );
}
